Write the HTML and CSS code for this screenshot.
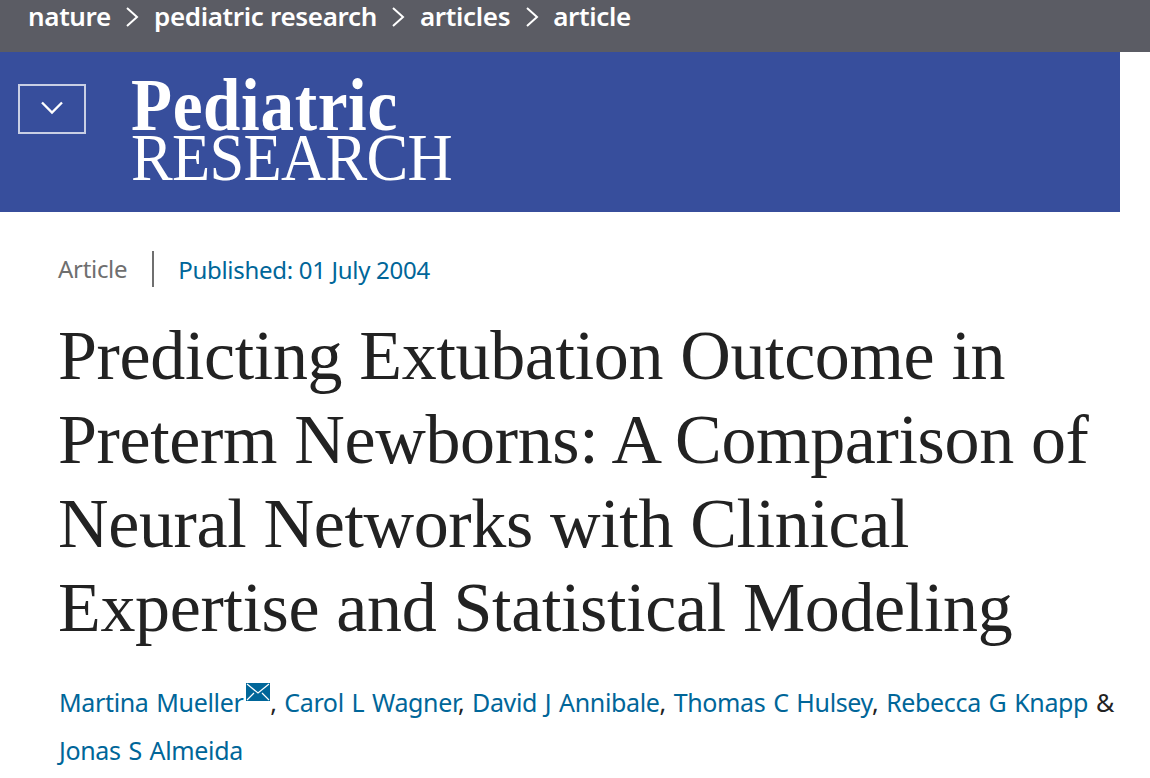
FILE: index.html
```html
<!DOCTYPE html>
<html>
<head>
  <title>Predicting Extubation Outcome in Preterm Newborns</title>
  <link rel="stylesheet" href="styles.css">
</head>
<body>
  <nav class="crumbs">
    <a href="#">nature</a>
    <svg class="crumb-arrow" viewBox="0 0 14 20"><path d="M2 1l10 9-10 9" /></svg>
    <a href="#">pediatric research</a>
    <svg class="crumb-arrow" viewBox="0 0 14 20"><path d="M2 1l10 9-10 9" /></svg>
    <a href="#">articles</a>
    <svg class="crumb-arrow" viewBox="0 0 14 20"><path d="M2 1l10 9-10 9" /></svg>
    <a href="#">article</a>
  </nav>

  <header class="masthead">
    <button class="menu-btn">
      <svg viewBox="0 0 20 12"><path d="M2 2l8 8 8-8" /></svg>
    </button>
    <div class="logo">
      <div class="logo-top">Pediatric</div>
      <div class="logo-bottom">RESEARCH</div>
    </div>
  </header>

  <main class="article">
    <div class="meta">
      <span class="meta-type">Article</span>
      <a class="meta-date" href="#">Published: 01 July 2004</a>
    </div>
    <h1>Predicting Extubation Outcome in Preterm Newborns: A Comparison of Neural Networks with Clinical Expertise and Statistical Modeling</h1>
    <p class="authors">
      <a href="#">Martina Mueller</a>
      <svg class="mail" viewBox="0 0 24 18"><rect width="24" height="18" /><path d="M1 1l11 9 11-9M1 17l7-7M23 17l-7-7" /></svg>, <a href="#">Carol L Wagner</a>, <a href="#">David J Annibale</a>, <a href="#">Thomas C Hulsey</a>, <a href="#">Rebecca G Knapp</a> &amp; <a href="#">Jonas S Almeida</a>
    </p>
  </main>
</body>
</html>
```

FILE: styles.css
```css
:root {
  --grey-bar: #5b5c64;
  --blue-bar: #374e9c;
  --link: #006699;
  --text: #222;
  --sans: "Noto Sans", "Open Sans", sans-serif;
  --serif: "Liberation Serif", serif;
}
body {
  margin: 0;
  background: white;
  color: var(--text);
  font-family: var(--sans);
  overflow: hidden;
}
a {
  color: var(--link);
  text-decoration: none;
}
.crumbs {
  display: flex;
  align-items: flex-start;
  gap: 14.5px;
  height: 52px;
  padding: 0 28px;
  background: var(--grey-bar);
}
.crumbs a {
  color: white;
  font-size: 26px;
  font-weight: 600;
  line-height: 33px;
  letter-spacing: -0.33px;
}
.crumb-arrow {
  width: 14px;
  height: 20px;
  margin-top: 7px;
  fill: none;
  stroke: white;
  stroke-width: 2;
}
.masthead {
  display: flex;
  align-items: flex-start;
  gap: 45px;
  width: 1120px;
  height: 160px;
  padding: 32px 0 0 18px;
  box-sizing: border-box;
  background: var(--blue-bar);
}
.menu-btn {
  display: flex;
  align-items: flex-start;
  justify-content: center;
  width: 68px;
  height: 50px;
  padding: 14px 0 0;
  background: none;
  border: 2px solid #c9cfe4;
  box-sizing: border-box;
}
.menu-btn svg {
  width: 26px;
  height: 15px;
  fill: none;
  stroke: white;
  stroke-width: 1.9;
}
.logo {
  color: white;
  font-family: var(--serif);
  margin-top: -8px;
  transform: scaleX(0.92);
  transform-origin: left;
}
.logo-top {
  font-size: 73px;
  font-weight: 700;
  line-height: 60px;
  letter-spacing: 0.7px;
}
.logo-bottom {
  font-size: 68px;
  line-height: 42px;
  letter-spacing: -0.8px;
}
.article {
  padding: 39px 30px 0 59px;
}
.meta {
  display: flex;
  align-items: center;
  height: 36px;
  font-size: 24px;
  letter-spacing: -0.3px;
}
.meta-type {
  color: #6f6f6f;
  margin-left: -1px;
  padding-right: 25px;
  border-right: 2px solid #6f6f6f;
  line-height: 36px;
}
.meta-date {
  padding-left: 24px;
}
h1 {
  margin: 27px 0 0 -1px;
  font-family: var(--serif);
  font-size: 70px;
  font-weight: 400;
  line-height: 84px;
  letter-spacing: -0.35px;
}
.authors {
  margin: 28px 0 0;
  font-size: 25px;
  line-height: 48px;
  letter-spacing: -0.35px;
  word-spacing: 1.6px;
}
.mail {
  width: 24px;
  height: 18px;
  margin-left: -5px;
  vertical-align: 11px;
}
.mail rect {
  fill: var(--link);
}
.mail path {
  fill: none;
  stroke: white;
  stroke-width: 1.2;
}
```
